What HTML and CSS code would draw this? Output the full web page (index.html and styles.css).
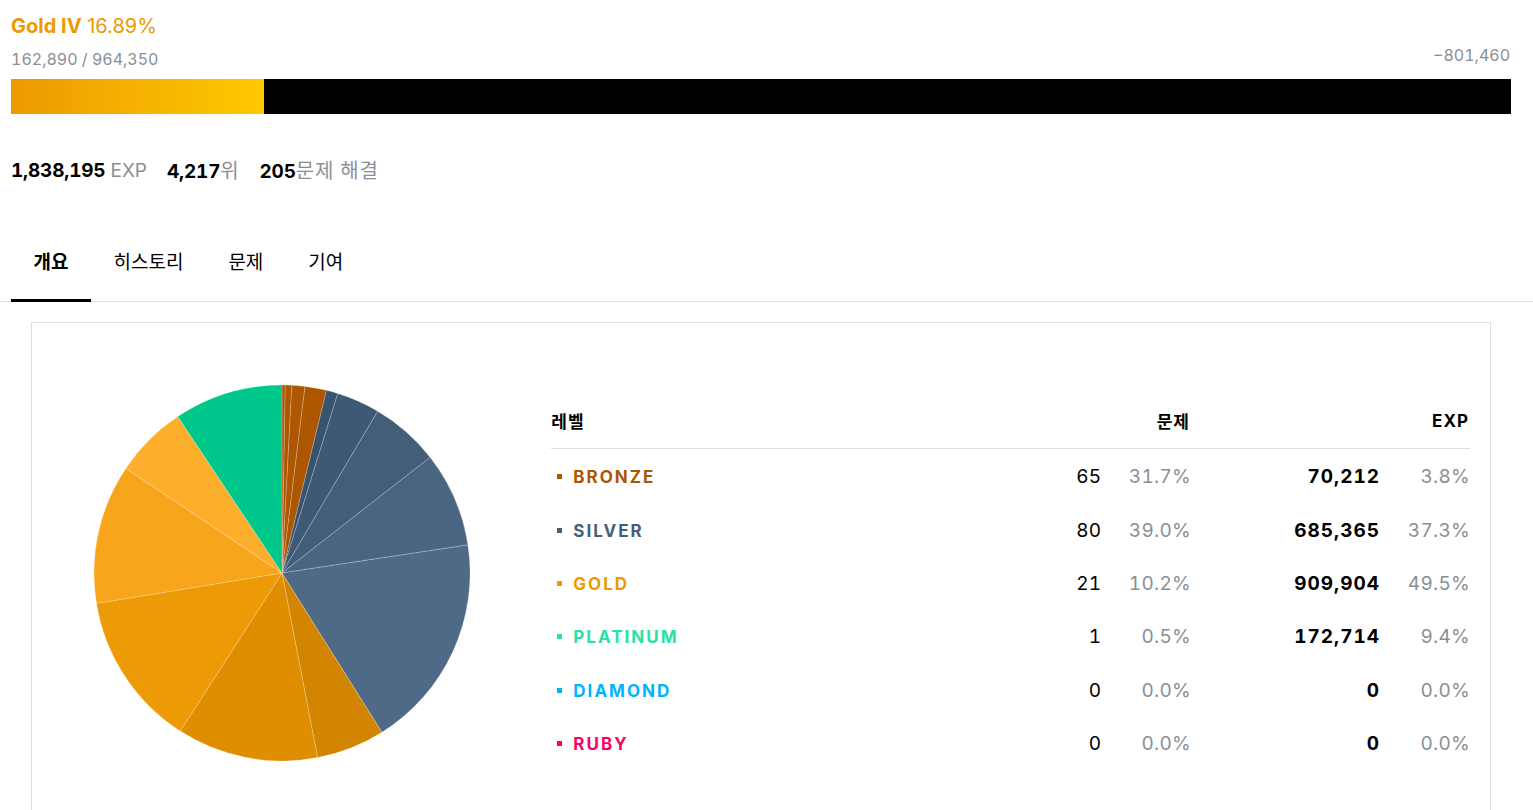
FILE: index.html
```html
<!DOCTYPE html>
<html lang="ko">
<head>
<meta charset="utf-8">
<title>Profile</title>
<link rel="stylesheet" href="styles.css">
</head>
<body>
<div class="page">
  <section class="tier">
    <div class="tier-head">
      <div class="tier-left">
        <div class="tier-name"><b>Gold IV</b> 16.89%</div>
        <div class="tier-exp">162,890 / 964,350</div>
      </div>
      <div class="tier-remain">−801,460</div>
    </div>
    <div class="bar"><div class="bar-fill" style="width:16.89%"></div></div>
  </section>

  <div class="stats">
    <span class="stat"><b>1,838,195</b> EXP</span>
    <span class="stat"><b>4,217</b><span class="ko">위</span></span>
    <span class="stat"><b>205</b><span class="ko">문제 해결</span></span>
  </div>
</div>

<nav class="tabs">
  <div class="tabs-inner">
    <a class="tab active">개요</a>
    <a class="tab">히스토리</a>
    <a class="tab">문제</a>
    <a class="tab">기여</a>
  </div>
</nav>

<div class="page">
  <div class="card">
    <div class="pie-col">
      <svg class="pie" width="376" height="376" viewBox="0 0 376 376">
        <g stroke="rgba(255,255,255,0.35)" stroke-width="0.6">
          <path fill="#ad5600" d="M188,188 L188,0 A188,188 0 0 1 191.3,0.03 Z"/>
          <path fill="#ad5600" d="M188,188 L191.3,0.03 A188,188 0 0 1 197.8,0.26 Z"/>
          <path fill="#ae5700" d="M188,188 L197.8,0.26 A188,188 0 0 1 211,1.4 Z"/>
          <path fill="#ad5600" d="M188,188 L211,1.4 A188,188 0 0 1 232.5,5.3 Z"/>
          <path fill="#38536d" d="M188,188 L232.5,5.3 A188,188 0 0 1 243.7,8.5 Z"/>
          <path fill="#3e5974" d="M188,188 L243.7,8.5 A188,188 0 0 1 283.7,26.2 Z"/>
          <path fill="#435e78" d="M188,188 L283.7,26.2 A188,188 0 0 1 336.1,72.25 Z"/>
          <path fill="#4a6581" d="M188,188 L336.1,72.25 A188,188 0 0 1 373.9,159.9 Z"/>
          <path fill="#4e6a87" d="M188,188 L373.9,159.9 A188,188 0 0 1 287.9,347.3 Z"/>
          <path fill="#d28500" d="M188,188 L287.9,347.3 A188,188 0 0 1 223.6,372.6 Z"/>
          <path fill="#df8e00" d="M188,188 L223.6,372.6 A188,188 0 0 1 86.3,346.1 Z"/>
          <path fill="#ec9a05" d="M188,188 L86.3,346.1 A188,188 0 0 1 2.5,218.4 Z"/>
          <path fill="#f7a61b" d="M188,188 L2.5,218.4 A188,188 0 0 1 31.8,83.4 Z"/>
          <path fill="#fdaf2b" d="M188,188 L31.8,83.4 A188,188 0 0 1 83.7,31.6 Z"/>
          <path fill="#00c78b" d="M188,188 L83.7,31.6 A188,188 0 0 1 188,0 Z"/>
        </g>
      </svg>
    </div>
    <div class="table-col">
      <table class="levels">
        <thead>
          <tr>
            <th class="c-name">레벨</th>
            <th class="c-num" colspan="2">문제</th>
            <th class="c-num" colspan="2">EXP</th>
          </tr>
        </thead>
        <tbody>
          <tr>
            <td class="c-name"><span class="lv bronze">BRONZE</span></td>
            <td class="c-cnt">65</td><td class="c-pct">31.7%</td>
            <td class="c-exp">70,212</td><td class="c-pct">3.8%</td>
          </tr>
          <tr>
            <td class="c-name"><span class="lv silver">SILVER</span></td>
            <td class="c-cnt">80</td><td class="c-pct">39.0%</td>
            <td class="c-exp">685,365</td><td class="c-pct">37.3%</td>
          </tr>
          <tr>
            <td class="c-name"><span class="lv gold">GOLD</span></td>
            <td class="c-cnt">21</td><td class="c-pct">10.2%</td>
            <td class="c-exp">909,904</td><td class="c-pct">49.5%</td>
          </tr>
          <tr>
            <td class="c-name"><span class="lv platinum">PLATINUM</span></td>
            <td class="c-cnt">1</td><td class="c-pct">0.5%</td>
            <td class="c-exp">172,714</td><td class="c-pct">9.4%</td>
          </tr>
          <tr>
            <td class="c-name"><span class="lv diamond">DIAMOND</span></td>
            <td class="c-cnt">0</td><td class="c-pct">0.0%</td>
            <td class="c-exp">0</td><td class="c-pct">0.0%</td>
          </tr>
          <tr>
            <td class="c-name"><span class="lv ruby">RUBY</span></td>
            <td class="c-cnt">0</td><td class="c-pct">0.0%</td>
            <td class="c-exp">0</td><td class="c-pct">0.0%</td>
          </tr>
        </tbody>
      </table>
    </div>
  </div>
</div>
</body>
</html>
```

FILE: styles.css
```css
* { box-sizing: border-box; }
html, body { margin: 0; padding: 0; background: #fff; }
body {
  font-family: Inter, "Noto Sans CJK KR", sans-serif;
  font-feature-settings: "tnum";
  color: #000;
  overflow: hidden;
}
.page {
  width: 1500px;
  margin-left: 11px;
}
.tier { padding-top: 13px; }
.tier-head {
  display: flex;
  justify-content: space-between;
  align-items: flex-end;
}
.tier-name {
  font-size: 20px;
  line-height: 26px;
  color: #ec9a00;
  font-feature-settings: normal;
}
.tier-name b { font-weight: 700; }
.tier-exp {
  margin-top: 10px;
  font-size: 16px;
  line-height: 20px;
  color: #8a8f95;
}
.tier-remain {
  font-size: 16px;
  line-height: 20px;
  color: #8a8f95;
  margin-bottom: 4px;
  margin-right: 1px;
}
.bar {
  margin-top: 10px;
  height: 35px;
  background: #000;
}
.bar-fill {
  height: 100%;
  background: linear-gradient(90deg, #ec9a00 0%, #fcc200 85%, #ffc800 100%);
}
.stats {
  margin-top: 44px;
  display: flex;
  gap: 20px;
  font-size: 19px;
  line-height: 26px;
  color: #8a8f95;
}
.stat b { color: #000; font-weight: 700; letter-spacing: -0.2px; }
.stat .ko { font-size: 20px; letter-spacing: 0.8px; }

.tabs {
  margin-top: 58px;
  border-bottom: 1px solid #dddfe0;
}
.tabs-inner {
  display: flex;
  margin-left: 11px;
}
.tab {
  display: block;
  padding: 8px 22.5px 24px;
  font-size: 19px;
  line-height: 24px;
  color: #000;
  border-bottom: 3px solid transparent;
  margin-bottom: -1px;
}
.tab.active {
  font-weight: 700;
  border-bottom-color: #000;
}

.card {
  margin: 20px 20px 0;
  border: 1px solid #dddfe0;
  border-bottom: none;
  padding: 20px 20px 40px;
  display: grid;
  grid-template-columns: 1fr 2fr;
  column-gap: 40px;
  height: 500px;
}
.pie-col {
  display: flex;
  justify-content: center;
  padding-top: 42px;
}
.pie { display: block; }
.table-col { padding-top: 51px; }
.levels {
  width: 100%;
  border-collapse: collapse;
  font-size: 19px;
}
.levels th {
  font-size: 17px;
  font-weight: 700;
  letter-spacing: 1px;
  height: 54px;
  padding: 0;
  border-bottom: 1px solid #dddfe0;
}
.levels td {
  height: 53.4px;
  padding: 4px 0 0;
}
.levels .c-name { text-align: left; }
.levels .c-num { text-align: right; padding-right: 1px; }
.levels td.c-cnt { text-align: right; width: 80px; }
.levels td.c-pct { text-align: right; width: 90px; color: #8a8f95; letter-spacing: 0.3px; }
.levels td.c-exp { text-align: right; width: 189px; font-weight: 700; letter-spacing: 1px; }
.lv {
  font-weight: 700;
  letter-spacing: 2px;
  font-size: 17px;
  padding-left: 22px;
  position: relative;
}
.lv::before {
  content: "";
  position: absolute;
  left: 6px;
  top: 50%;
  width: 5px;
  height: 5px;
  margin-top: -3px;
  background: currentColor;
}
.bronze { color: #ad5600; }
.silver { color: #435f7a; }
.gold { color: #ec9a00; }
.platinum { color: #27e2a4; }
.diamond { color: #00b4fc; }
.ruby { color: #ff0062; }
```
